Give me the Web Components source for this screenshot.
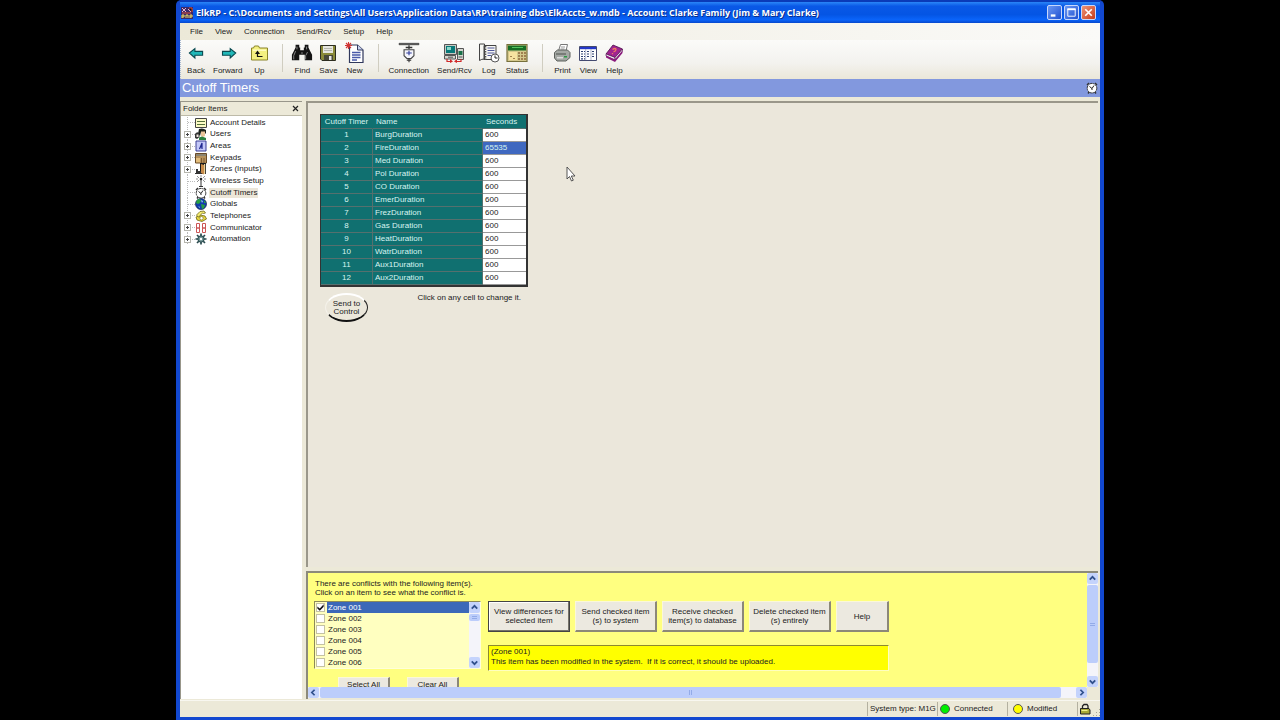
<!DOCTYPE html>
<html lang="en">
<head>
<meta charset="utf-8">
<title>ElkRP - Cutoff Timers</title>
<style>
html,body{margin:0;background:#000}
body{font:8px/10px "Liberation Sans",Arial,sans-serif;color:#222;min-height:100vh;display:flex;justify-content:center}
elk-window{width:72.5%}
</style>
</head>
<body>
<elk-window></elk-window>
<script>
const ICONS = {
app:`<svg viewBox="0 0 12 12"><path fill="#3b2a6b" d="M0 0h12v12H0z"/><path stroke="#e8b0c8" d="M1 1l4 4M5 1L1 5M7 2l3 3"/><path stroke="#e05030" d="M8 1h3v4M1 6h9"/><path stroke="#f0e060" stroke-width="1" fill="none" d="M1 11V8h2v2H1M5 11V8h2V11M9 11V8h2v2H9"/></svg>`,
back:`<svg viewBox="0 0 20 20"><path fill="#20b8b8" stroke="#0b4a50" stroke-width="1" d="M4 10l5-4v2.500h7v3.500H9v2.500z"/></svg>`,
forward:`<svg viewBox="0 0 20 20"><path fill="#20b8b8" stroke="#0b4a50" stroke-width="1" d="M17 10l-5-4v2.500H5v3.500h7v2.500z"/></svg>`,
up:`<svg viewBox="0 0 20 20"><path fill="#f4f080" stroke="#8a8428" d="M2.500 17V5h2l1-2h4l1 2h8v12z"/><path fill="#fffcc0" d="M4 6.500h13v1.500H4z"/><path fill="none" stroke="#111" stroke-width="1.200" d="M8.500 9.500v4h5"/><path fill="#111" d="M6 11l2.500-3.500L11 11z"/></svg>`,
find:`<svg viewBox="0 0 24 20"><path fill="#141414" d="M5 1h4v3h1v3h4V4h1V1h4v3l2 4 2 4v6h-8v-6h-6v6H1v-6l2-4 2-4z"/><path stroke="#a0a0a0" stroke-width=".9" d="M6.500 3v3M5 8l-2 5v4M17 3v3M18 9l-2 4v4M11 10h2"/></svg>`,
save:`<svg viewBox="0 0 20 20"><path fill="#8a8a38" stroke="#2c2c20" d="M2.500 2.500h15v15H4l-1.500-1.500z"/><path fill="#e6e6de" d="M5 3h10v7H5z"/><path stroke="#b5b5ae" d="M6 5.500h8M6 7.500h8"/><path fill="#484838" d="M6 12h9v5H6z"/><path fill="#e8e8e8" d="M11 13h2.500v4H11z"/></svg>`,
"new":`<svg viewBox="0 0 20 22"><path fill="#fff" stroke="#30385c" stroke-width="1.200" d="M4.500 3h8l5.500 5v12.500H4.500z"/><path fill="#c9d2ee" stroke="#30385c" d="M12.500 3v5H18"/><path stroke="#4858a8" stroke-width="1.300" d="M7 10.500h8.500M7 13h8.500M7 15.500h8.500M7 18h5"/><path stroke="#d23434" stroke-width="1.100" d="M3.500 0v7M0 3.500h7M1 1l5 5M6 1L1 6"/></svg>`,
connection:`<svg viewBox="0 0 20 20"><path fill="#555" stroke="#333" stroke-width=".6" d="M1 1.200h18v1.300H1z"/><path stroke="#333" stroke-width="1.200" d="M10 3v3.500M7 5h6"/><path fill="#f4f5fc" stroke="#444" d="M5.500 7h9v5.500L12 15H8l-2.500-2.500z"/><path stroke="#303c98" d="M7.500 10h5M10 8v4"/><path stroke="#333" d="M10 15V18.500M8 16.500h4"/></svg>`,
send:`<svg viewBox="0 0 22 20"><path fill="#c8cac4" stroke="#555" d="M1.500 1.500h12v10h-12z"/><path fill="#087878" d="M3 3h9v7H3z"/><path fill="#8cd8c8" d="M4 4h4v3H4z"/><path fill="#d4d6d0" stroke="#555" d="M1.500 12.500h11v3.500h-11zM14.500 5.500h6v11h-6z"/><path fill="#187048" d="M15.500 8h4v4h-4z"/><path stroke="#555" d="M5 14.200h5M15.500 14h4"/><path fill="none" stroke="#d02828" stroke-width="1.200" d="M4 16v2.500h4M18 16v2.500h-5"/><path fill="#d02828" d="M7 16l3 2.500L7 20zM14 16l-3 2.500 3 1.500z"/></svg>`,
log:`<svg viewBox="0 0 22 20"><path fill="#f7f7f3" stroke="#444" d="M6 2.500h12v14H6zM1.500 1h5v15q-3 0-5 1.500z"/><path stroke="#555" stroke-width="1.600" stroke-dasharray="1.500 1" d="M7.500 3v14"/><path stroke="#50589a" stroke-width="1.200" d="M9.500 5h7M9.500 7.500h7M9.500 10h7M9.500 12.500h4"/><circle cx="17" cy="15" r="4" fill="#fff" stroke="#555"/><path stroke="#222" fill="none" d="M17 12.500V15h2.500"/></svg>`,
status:`<svg viewBox="0 0 22 20"><path fill="#d4c88c" stroke="#77703c" stroke-width="1.200" d="M1 1.500h20v17H1z"/><path fill="#166c24" d="M2 2.500h18v5H2z"/><path stroke="#52c35c" d="M6 4.500h11"/><path fill="#f7e2a0" d="M3 9h8v8H3z"/><path fill="#a08050" d="M12 9h2v2h-2zm3 0h2v2h-2zm3 0h2v2h-2zm-6 3h2v2h-2zm3 0h2v2h-2zm3 0h2v2h-2zm-6 3h2v2h-2zm3 0h2v2h-2zm3 0h2v2h-2zM4 13h2v1H4zm3 2h2v1H7z"/></svg>`,
print:`<svg viewBox="0 0 20 20"><path fill="#fff" stroke="#777" d="M6.500 8l2-6.500h7L14 8z"/><path stroke="#999" d="M9 4h4M8.500 6h4"/><path fill="#a4a8a4" stroke="#5c605c" d="M2.500 9.500l3-2.500h10l2.500 2.500v5l-4 3.500h-9l-2.500-3z"/><path fill="#787c78" d="M4 10h10v2H4z"/><path fill="#2a9a44" d="M12 13h3v1.500h-3z"/><path fill="#dcdcdc" d="M5 14h6v1.500H5z"/></svg>`,
view:`<svg viewBox="0 0 20 20"><path fill="#fff" stroke="#444a70" d="M1.500 3.500h17v14h-17z"/><path fill="#2438c8" d="M2 4h16v2.200H2z"/><path stroke="#2e4070" stroke-width="1.200" stroke-dasharray="2 1" d="M3 8.500h4M9 8.500h3M14 8.500h3M3 11h4M9 11h3M14 11h3M3 13.500h4M9 13.500h3M14 13.500h3M3 15.800h4"/><path stroke="#9098b8" stroke-width=".7" d="M7.700 6v11M13 6v11"/></svg>`,
help:`<svg viewBox="0 0 20 20"><path fill="#a02490" stroke="#4a0c48" stroke-width=".8" d="M2 11l7-9 9.500 4-7.500 8.500z"/><path fill="#f4e8f4" stroke="#4a0c48" stroke-width=".6" d="M2 11v2l9 4v-2.500zM11 14.500V17L18.500 8V6z"/><path fill="#8a1a7c" d="M2 12.500l9 4v2.500l-9-4.500zM11 16.500l7.500-9v2.500L11 19z"/><path stroke="#f07860" stroke-width="1.300" fill="none" d="M8.500 6.500q3-2 3.500 0 0 1.500-2.500 2.500M8.500 10v1.300"/></svg>`,
clock:`<svg viewBox="0 0 12 12"><path stroke="#333" stroke-width="1.400" d="M1 3l2-2M11 3L9 1M2 11.500l1.500-2M10 11.500l-1.500-2"/><circle cx="6" cy="6.200" r="4.800" fill="#fff" stroke="#333" stroke-dasharray="2 .5"/><path stroke="#222" fill="none" d="M3.500 4.500l2.500 2 2-3M6 6.500v1.500"/></svg>`,
account:`<svg viewBox="0 0 12 12"><path fill="#fbfbc4" stroke="#444" d="M.5 1.500h11v9H.5z"/><path stroke="#56703c" d="M2 4.500h8M2 7.500h8"/></svg>`,
users:`<svg viewBox="0 0 12 12"><path fill="#1c221c" d="M4 1q4-1.500 7 1v4L9 4 6 4 5 8 3 6z"/><path fill="#e9c49b" d="M6 3.500h4V8L8 9 6 8z"/><path fill="#278040" d="M4 9.500l3-1 4 1.500v2H4z"/><path fill="#333" d="M0 6q2-3 4-1l.5 4L2 11 0 10z"/><path fill="#f2e8df" d="M1.500 6.500h2v2.500h-2z"/></svg>`,
areas:`<svg viewBox="0 0 12 12"><path fill="#c4c8f8" stroke="#3b3f94" d="M1 1h10v10H1z"/><path fill="none" stroke="#202890" stroke-width="1.200" d="M4.500 9l2.500-6v6M5 7h2"/></svg>`,
keypads:`<svg viewBox="0 0 12 12"><path fill="#e4be7c" stroke="#684a26" d="M.5 1.500h11v9.500H.5z"/><path fill="#8b8370" d="M1 2h10v2H1z"/><path stroke="#704c28" stroke-width=".8" d="M1 5h10M5 7h6M5 9h6M6.500 6v5M9 6v5"/></svg>`,
zones:`<svg viewBox="0 0 12 12"><path fill="#1d1d1d" d="M5 0h6v11H5z"/><path fill="#c88b4a" d="M6 1l3 1v9.500L6 10z"/><path fill="#e9d39a" d="M9 1h1.200v10H9z"/><path fill="#333" d="M1 6h2v5H1zM3 8h3v3H3zM0 10h6v1H0z"/></svg>`,
wireless:`<svg viewBox="0 0 12 12"><path stroke="#333" d="M6 4v8M4 11.500h4"/><circle cx="6" cy="4" r="1.300" fill="#222"/><path stroke="#666" stroke-width=".7" d="M2 1l2 2M10 1L8 3M2 7l2-2M10 7L8 5M1 4h2M9 4h2M6 0v2"/></svg>`,
globals:`<svg viewBox="0 0 12 12"><circle cx="6" cy="6" r="5.500" fill="#123cae" stroke="#102048" stroke-width=".7"/><path fill="#28a040" d="M2 2q3-2 4 0L5 5 3 6 1 5zM6 6l4 1-1 3-2 1zM9 2l2 3H9z"/><path fill="#a4dcf4" d="M6 2l2 1-1 2zM3 8l2 1v1z"/></svg>`,
phones:`<svg viewBox="0 0 12 12"><path fill="#e8d840" stroke="#6d6418" stroke-width=".8" d="M1 7l4-2 5 1 1.500 3L7 11.500 2 10z"/><path fill="#f4ec70" stroke="#6d6418" stroke-width=".8" d="M1.500 5L5 1.500 9 1l1.500 2-2 .5-1-.5L5 5.500v1L3 7z"/><circle cx="6.500" cy="8.200" r="1.700" fill="#fff" stroke="#6d6418" stroke-width=".6"/></svg>`,
comm:`<svg viewBox="0 0 12 12"><path fill="none" stroke="#cc5656" stroke-width="1" d="M1.500 1.500h3V6h-3zM1.500 6h3v4.500h-3zM7.500 1.500h3V6h-3zM7.500 6h3v4.500h-3z"/></svg>`,
auto:`<svg viewBox="0 0 12 12"><path stroke="#29494d" stroke-width="1.700" d="M6 .5v11M.5 6h11M2 2l8 8M10 2l-8 8"/><circle cx="6" cy="6" r="3.200" fill="#6c9090" stroke="#29494d"/><circle cx="6" cy="6" r="1.200" fill="#fff"/></svg>`,
lock:`<svg viewBox="0 0 12 12"><path fill="none" stroke="#222" stroke-width="1.300" d="M3.500 6V3l1.500-1.500h3L9 3v3"/><path fill="#a8a838" stroke="#222" d="M1.500 5.500h8.500L11 7v4H1.500z"/><path stroke="#eef08c" d="M2.500 7.500h6"/></svg>`,
cursor:`<svg viewBox="0 0 10 16"><path fill="#fff" stroke="#444" stroke-width=".9" d="M1 1v12l2.500-2.500 2 4.500 1.800-.8-2-4.200H9z"/></svg>`,
min:`<svg viewBox="0 0 14 14"><path fill="#fff" d="M3 9h5v2.500H3z"/></svg>`,
max:`<svg viewBox="0 0 14 14"><path fill="none" stroke="#fff" d="M3 3.500h8v7.500H3z"/><path fill="#fff" d="M2.500 2.500h9v2h-9z"/></svg>`,
close:`<svg viewBox="0 0 14 14"><path stroke="#fff" stroke-width="1.800" d="M3.500 3.500l7 7M10.500 3.500l-7 7"/></svg>`
};
const def = (name, html) => customElements.define(name, class extends HTMLElement {
  connectedCallback(){
    if (this.shadowRoot) return;
    const t = document.createElement('template');
    t.innerHTML = typeof html === 'function' ? html(this) : html;
    this.attachShadow({mode:'open'}).append(t.content.cloneNode(true));
  }
});

def('elk-icon', el => `<style>:host{display:block;width:12px;height:12px;flex:none}svg{display:block;width:100%;height:100%}</style>${ICONS[el.getAttribute('name')]}`);

def('title-bar', `<style>
:host{display:flex;align-items:center;height:21px;padding:0 4px 0 1px;gap:3px;background:linear-gradient(#2a86f8,#0a58e6 20%,#0455e4 60%,#0a64fa 85%,#0748cc);color:#fff}
h1{margin:0;flex:1;font:bold 9px/12px "Open Sans","Liberation Sans",sans-serif;white-space:nowrap;overflow:hidden;text-shadow:1px 1px #0a2f8c}
button{width:15px;height:15px;padding:0;border:1px solid #c8d8fc;border-radius:2px;background:linear-gradient(135deg,#6b98f4,#2050d0);display:grid;place-items:center}
button:last-of-type{background:linear-gradient(135deg,#ec9478,#c83c18)}
elk-icon{width:12px;height:12px}div{display:flex;gap:2px}
div elk-icon{width:13px;height:13px}
</style><elk-icon name="app"></elk-icon><h1><slot></slot></h1><div>
<button aria-label="Minimize"><elk-icon name="min"></elk-icon></button><button aria-label="Maximize"><elk-icon name="max"></elk-icon></button><button aria-label="Close"><elk-icon name="close"></elk-icon></button></div>`);

def('menu-bar', `<style>
:host{display:flex;height:17px;padding:0 4px;background:linear-gradient(90deg,#ece9d8,#f4f2ea 50%,#fafaf8)}
button{font:inherit;color:inherit;border:0;background:none;padding:0 6px}
</style>${['File','View','Connection','Send/Rcv','Setup','Help'].map(x=>`<button>${x}</button>`).join('')}`);

def('tool-button', el => `<style>
:host{display:block;flex:none}
button{font:inherit;color:inherit;border:0;background:none;padding:2px 4px 0;min-width:26px;height:38px;display:flex;flex-direction:column;align-items:center;gap:2px}
elk-icon{width:22px;height:22px;margin:0 -4px}
:host([small]) elk-icon{padding:1px;width:20px;height:20px}
</style><button><elk-icon name="${el.getAttribute('icon')}"></elk-icon><slot></slot></button>`);

def('tool-bar', `<style>
:host{display:flex;height:39px;padding:0 2px;background:linear-gradient(#fbfbf9,#f3f2ee 60%,#eae7d9);border-left:1px dotted #a8b8d0;box-sizing:border-box;overflow:hidden}
hr{width:1px;height:28px;margin:4px 6px 0 10px;border:0;background:#d0cdc0;flex:none}
</style>
<tool-button icon="back">Back</tool-button><tool-button icon="forward">Forward</tool-button><tool-button small icon="up">Up</tool-button><hr>
<tool-button icon="find">Find</tool-button><tool-button small icon="save">Save</tool-button><tool-button icon="new">New</tool-button><hr>
<tool-button icon="connection">Connection</tool-button><tool-button icon="send">Send/Rcv</tool-button><tool-button icon="log">Log</tool-button><tool-button icon="status">Status</tool-button><hr>
<tool-button small icon="print">Print</tool-button><tool-button small icon="view">View</tool-button><tool-button small icon="help">Help</tool-button>`);

def('section-header', `<style>
:host{display:flex;align-items:center;justify-content:space-between;height:18px;padding:0 2px;background:#8298de;color:#fff}
h2{margin:0;font:13px/18px "Liberation Sans",sans-serif}
</style><h2><slot></slot></h2><elk-icon name="clock"></elk-icon>`);

def('tree-item', el => `<style>
:host{display:flex;flex:1;align-items:center;min-height:0;
 background:repeating-linear-gradient(#bbb 0 1px,transparent 1px 2px) 6px 0/1px 100% no-repeat}
.x{width:14px;height:1px;position:relative;flex:none;background:repeating-linear-gradient(90deg,#bbb 0 1px,transparent 1px 2px) 7px 0/7px 1px no-repeat}
.x button{position:absolute;left:3px;top:-3px;width:7px;height:7px;padding:0;border:1px solid #b5b5ad;background:linear-gradient(#444,#444) 1px 2px/3px 1px no-repeat,linear-gradient(#444,#444) 2px 1px/1px 3px no-repeat,#fff}
a{color:inherit;text-decoration:none;padding:0 1px;margin-left:2px;white-space:nowrap}
:host([selected]) a{background:#ece6d8}
</style><span class="x">${el.hasAttribute('leaf')?'':'<button aria-label="Expand"></button>'}</span><elk-icon name="${el.getAttribute('icon')}"></elk-icon><a href="#"><slot></slot></a>`);

def('folder-panel', `<style>
:host{display:block;background:#fff;border:1px solid #98968a;border-width:1px 0 0 1px;box-sizing:border-box}
header{display:flex;justify-content:space-between;align-items:center;height:13px;padding:0 2px;background:#ece9d8;border-bottom:1px solid #bdbaa8}
header button{border:0;background:none;padding:0;width:9px;height:9px}
header svg{display:block;width:9px;height:9px}
nav{display:flex;flex-direction:column;height:128px;margin-top:1px}
</style><header><span>Folder Items</span><button aria-label="Close panel"><svg viewBox="0 0 9 9"><path stroke="#222" stroke-width="1.200" d="M2 2l5 5M7 2L2 7"/></svg></button></header>
<nav><tree-item leaf icon="account">Account Details</tree-item><tree-item icon="users">Users</tree-item><tree-item icon="areas">Areas</tree-item><tree-item icon="keypads">Keypads</tree-item><tree-item icon="zones">Zones (Inputs)</tree-item><tree-item leaf icon="wireless">Wireless Setup</tree-item><tree-item leaf selected icon="clock">Cutoff Timers</tree-item><tree-item leaf icon="globals">Globals</tree-item><tree-item icon="phones">Telephones</tree-item><tree-item icon="comm">Communicator</tree-item><tree-item icon="auto">Automation</tree-item></nav>`);

const timers=['BurgDuration','FireDuration','Med Duration','Pol Duration','CO Duration','EmerDuration','FrezDuration','Gas Duration','HeatDuration','WatrDuration','Aux1Duration','Aux2Duration'];
def('timer-table', `<style>
:host{display:block;width:208px;box-sizing:border-box;border:1px solid #333;border-width:1px 2px 2px 1px}
table{width:100%;table-layout:fixed;border-spacing:0;background:#107070;color:#d8f4f0}
th,td{height:13px;box-sizing:border-box;padding:0 2px;font-weight:normal;text-align:left;border:0 solid #55706e;border-width:0 1px 1px 0;line-height:10px}
th:first-child{text-align:center;width:52px}th:nth-child(2){width:110px}
thead th{height:14px;border-right-color:#107070}thead th:nth-child(n+2){padding-left:3px}
tbody td:last-child{background:#fff;color:#222;border-color:#999;border-right:0}
tbody td.sel{background:#3f68c0;color:#d8f4f0}
</style><table><thead><tr><th>Cutoff Timer</th><th>Name</th><th>Seconds</th></tr></thead><tbody>
${timers.map((n,i)=>`<tr><th scope="row">${i+1}</th><td>${n}</td><td${i==1?' class="sel"':''}>${i==1?65535:600}</td></tr>`).join('')}
</tbody></table>`);

def('timers-view', `<style>
:host{display:block;position:relative;padding:11px 12px;border:1px solid #8c8a80;border-width:2px 0 0 2px;border-color:#9a978a;background:#ebe7db;box-sizing:border-box}
.under{display:flex;width:208px;justify-content:space-between;padding:6px 7px 0 5px;box-sizing:border-box}
.under button{font:inherit;line-height:8px;color:inherit;width:43px;height:29px;padding:0;background:none;border:2px solid;border-width:2px 1px 2px 1px;border-radius:50%;border-color:#fff #222 #111 #f4f2ea}
elk-icon{position:absolute;left:258px;top:63px;width:10px;height:16px}
</style><timer-table></timer-table><div class="under"><button>Send to<br>Control</button><span>Click on any cell to change it.</span></div><elk-icon name="cursor"></elk-icon>`);

def('scroll-bar', el => { const v=el.hasAttribute('vertical'); const a=v?['M2.500 6l2.500-2.500L7.500 6','M2.500 4l2.500 2.500L7.500 4']:['M6 2.500L3.500 5 6 7.500','M4 2.500L6.500 5 4 7.500'];
return `<style>
:host{display:flex;flex-direction:${v?'column':'row'};background:#f4f4fa}
button{flex:none;width:11px;height:11px;padding:0;border:0;border-radius:2px;background:#c4d3fc}
svg{display:block;width:11px;height:11px}
div{flex:0 0 var(--thumb);margin:${v?'1px 0':'0 1px'};background:#bccdfb;border-radius:2px;display:grid;place-items:center}
i{${v?'width:5px;height:3px;border-block':'width:3px;height:5px;border-inline'}:1px solid #93abe8;box-sizing:border-box}
span{flex:1}
</style><button aria-label="Scroll back"><svg viewBox="0 0 10 10"><path fill="none" stroke="#30508c" stroke-width="1.600" d="${a[0]}"/></svg></button><div><i></i></div><span></span><button aria-label="Scroll forward"><svg viewBox="0 0 10 10"><path fill="none" stroke="#30508c" stroke-width="1.600" d="${a[1]}"/></svg></button>`});

def('push-button', `<style>
:host{display:block}
button{width:100%;height:100%;font:inherit;line-height:9px;color:#222;padding:0 2px;background:#ece9e0;border:solid;border-width:1px 2px 2px 1px;border-color:#fbf8d8 #8c8878 #8c8878 #fbf8d8}
:host([default]) button{border:1px solid #444;padding:0 4px 1px;box-shadow:inset -1px -1px #77746a,inset 1px 1px #fff}
</style><button><slot></slot></button>`);

def('zone-list', `<style>
:host{display:flex;height:68px;box-sizing:border-box;border:1px solid #8c8a58;border-color:#8c8a58 #ffffd8 #ffffd8 #8c8a58;background:#ffffc0}
ul{list-style:none;margin:0;padding:0;flex:1}
li{display:flex;align-items:center;height:11px}
input{appearance:none;flex:none;width:9px;height:9px;margin:0 2px 0 1px;border:1px solid #c4c2a4;background:#fff}
input:checked::before{content:"";display:block;width:7px;height:7px;background:#111;clip-path:polygon(5% 35%,40% 65%,95% 5%,95% 40%,40% 98%,5% 65%)}
label{flex:1;line-height:11px;padding-left:1px}
li:first-child label{background:#3c68b8;color:#fff}
scroll-bar{--thumb:7px}
</style><ul>${[1,2,3,4,5,6].map(n=>`<li><input type="checkbox" id="z${n}"${n==1?' checked':''}><label for="z${n}">Zone 00${n}</label></li>`).join('')}</ul><scroll-bar vertical></scroll-bar>`);

def('conflict-panel', `<style>
:host{display:grid;grid-template-columns:1fr 11px;grid-template-rows:114px 11px;padding-bottom:1px;background:#ece9d8;border:2px solid #8c8a7a;border-width:2px 0 0 2px;box-sizing:border-box}
.body{background:#ffff80;overflow:hidden;padding:6px 6px 0}
p{margin:0;line-height:9px;padding-left:1px}
.cols{display:grid;grid-template-columns:167px 401px;gap:7px;margin-top:4px}
.row{display:flex;gap:5px;height:31px;margin-bottom:13px}
.row push-button{flex:0 0 82px}.row push-button:last-child{flex:1}
output{display:block;height:26px;box-sizing:border-box;padding:1px 2px;line-height:10px;background:#ff0;border:1px solid;border-color:#8c8a30 #ffffc0 #ffffc0 #8c8a30;white-space:pre}
.sel{display:flex;gap:17px;padding:8px 0 0 24px}.sel push-button{width:52px;height:16px}
.h{--thumb:calc(100% - 38px)}.v{--thumb:78px}
</style><div class="body"><p>There are conflicts with the following item(s).<br>Click on an item to see what the conflict is.</p>
<div class="cols"><div><zone-list></zone-list><div class="sel"><push-button>Select All</push-button><push-button>Clear All</push-button></div></div>
<div><div class="row"><push-button default>View differences for selected item</push-button><push-button>Send checked item<br>(s) to system</push-button><push-button>Receive checked item(s) to database</push-button><push-button>Delete checked item<br>(s) entirely</push-button><push-button>Help</push-button></div>
<output>(Zone 001)<br>This item has been modified in the system.  If it is correct, it should be uploaded.</output></div></div></div>
<scroll-bar class="v" vertical></scroll-bar><scroll-bar class="h"></scroll-bar>`);

def('status-bar', `<style>
:host{display:flex;justify-content:flex-end;height:17px;padding:1px 0;box-sizing:border-box;border-top:1px solid #f8f7f0;background:#ece9d8}
span{display:flex;align-items:center;gap:4px;border-left:1px solid #b4b1a0;padding:0 3px 0 2px;box-sizing:border-box;width:70px;white-space:nowrap}
b{width:8px;height:8px;border:1px solid #555;border-radius:50%;background:#0e0}
.m{padding-left:5px}.m b{background:#ff0}
.l{width:23px;padding-left:1px}
i{width:8px;height:8px;margin-top:auto;background:radial-gradient(circle,#a8a594 40%,transparent 45%) 0 0/3px 3px;clip-path:polygon(100% 0,100% 100%,0 100%);margin-left:-8px}
</style><span>System type: M1G</span><span><b></b>Connected</span><span class="m"><b></b>Modified</span><span class="l"><elk-icon name="lock"></elk-icon></span><i></i>`);

def('elk-window', `<style>
:host{display:flex;flex-direction:column;min-height:100vh;box-sizing:border-box;border:solid #1248d0;border-width:2px 4px 3px;border-top-color:#0a3ab8;border-radius:5px 5px 0 0;background:#ece9d8}
.work{flex:1;display:grid;grid-template-columns:122px 1fr;column-gap:4px;padding:4px 2px 1px 0}
.right{display:grid;grid-template-rows:1fr auto;row-gap:4px}
</style><title-bar>ElkRP - C:\\Documents and Settings\\All Users\\Application Data\\RP\\training dbs\\ElkAccts_w.mdb - Account: Clarke Family (Jim &amp; Mary Clarke)</title-bar>
<menu-bar></menu-bar><tool-bar></tool-bar><section-header>Cutoff Timers</section-header>
<div class="work"><folder-panel></folder-panel><div class="right"><timers-view></timers-view><conflict-panel></conflict-panel></div></div>
<status-bar></status-bar>`);
</script>
</body>
</html>
